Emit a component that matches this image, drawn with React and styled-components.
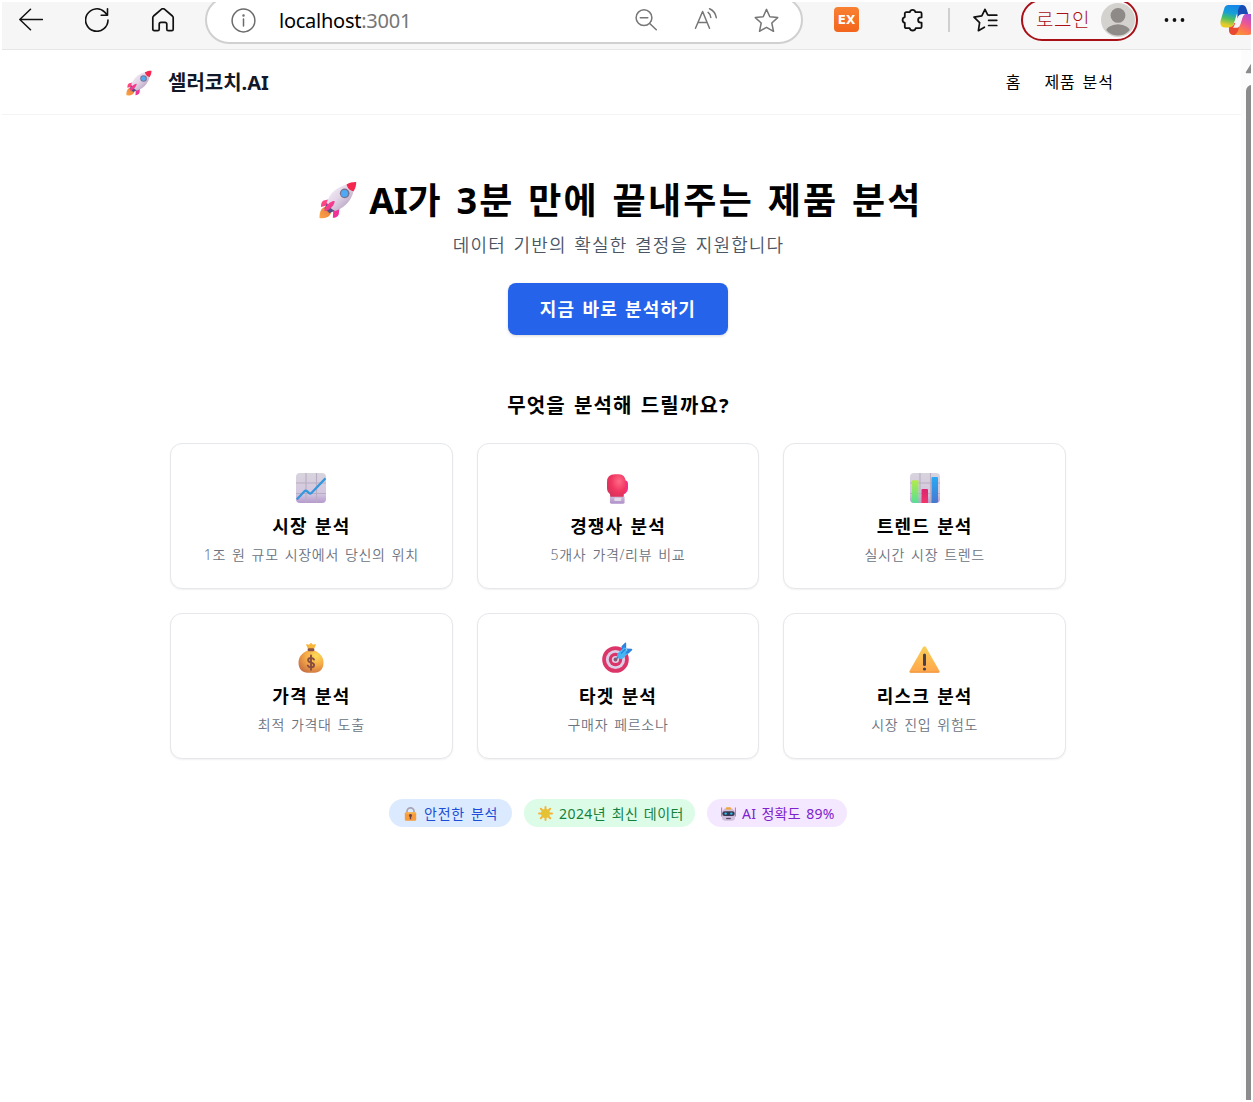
import React from 'react';
import styled, { createGlobalStyle } from 'styled-components';

const GlobalStyle = createGlobalStyle`
  *, *::before, *::after { box-sizing: border-box; }
  body {
    margin: 0;
    background: #fff;
    color: #000;
    font-family: "Noto Sans", "Noto Sans CJK KR", sans-serif;
    overflow: hidden;
  }
  h1, h2, h3, p { margin: 0; }
  svg { display: block; flex: none; }
`;

const Window = styled.div`
  width: 1253px;
  height: 1102px;
  padding: 2px;
  display: flex;
  flex-direction: column;
  overflow: hidden;
`;

/* Browser toolbar */
const Toolbar = styled.div`
  height: 48px;
  flex: none;
  padding: 0 0 12px 17px;
  display: flex;
  align-items: center;
  background: #f6f6f6;
  border-bottom: 1px solid #e6e6e6;
  overflow: hidden;
`;

const NavButtons = styled.div`
  display: flex;
  gap: 42px;
  margin-right: 30px;
`;

const AddressBar = styled.div`
  width: 598px;
  height: 48px;
  flex: none;
  display: flex;
  align-items: center;
  padding: 1px 22px 0 24px;
  margin-right: 31px;
  background: #fff;
  border: 2px solid #d0d0d0;
  border-radius: 24px;
`;

const Url = styled.span`
  flex: 1;
  margin-left: 23px;
  font-family: "Noto Sans", sans-serif;
  font-size: 20px;
  letter-spacing: -0.25px;
  color: #767676;
  b { font-weight: 400; color: #000; }
`;

const AddressActions = styled.div`
  display: flex;
  gap: 36px;
`;

const ExtensionBadge = styled.div`
  width: 25px;
  height: 25px;
  flex: none;
  border-radius: 4px;
  display: grid;
  place-items: center;
  background: linear-gradient(#f98032, #f2651c);
  color: #fff;
  font: 700 12px/14px "DejaVu Sans", sans-serif;
`;

const Slot = styled.div`
  flex: none;
  margin-left: ${(p) => p.$gap}px;
`;

const ToolbarDivider = styled.div`
  width: 2px;
  height: 24px;
  flex: none;
  margin-left: 24px;
  background: #cfcfcf;
`;

const LoginPill = styled.div`
  width: 117px;
  height: 42px;
  flex: none;
  margin-left: 23px;
  padding: 0 1px 0 13px;
  display: flex;
  align-items: center;
  justify-content: space-between;
  border: 2px solid #a80f16;
  border-radius: 21px;
  background: #f9f9f9;
  color: #a80f16;
  font: 300 19px/1 "Noto Sans CJK KR", sans-serif;
  span { margin-top: -3px; letter-spacing: 0.5px; white-space: nowrap; }
`;

/* Page */
const Viewport = styled.div`
  flex: 1;
  min-height: 0;
  display: flex;
`;

const Page = styled.div`
  flex: 1;
  min-width: 0;
`;

const Header = styled.header`
  height: 65px;
  padding-right: 7px;
  border-bottom: 1px solid #f3f4f6;
`;

const HeaderInner = styled.div`
  width: 1024px;
  height: 100%;
  margin: 0 auto;
  padding: 1px 17px 0 20px;
  display: flex;
  align-items: center;
  justify-content: space-between;
`;

const Brand = styled.div`
  display: flex;
  align-items: center;
  gap: 16px;
  font: 700 20px/28px "Noto Sans", "Noto Sans CJK KR", sans-serif;
  color: #111827;
`;

const NavLinks = styled.nav`
  display: flex;
  gap: 24px;
  margin-top: -1px;
  font-size: 16px;
  line-height: 24px;
  letter-spacing: 0.9px;
  word-spacing: 1.8px;
  span { margin-right: -0.8px; }
`;

const MainArea = styled.div`
  padding: 63px 7px 0 0;
`;

const Main = styled.main`
  width: 896px;
  margin: 0 auto;
  display: flex;
  flex-direction: column;
  align-items: center;
`;

const Title = styled.h1`
  display: flex;
  align-items: center;
  gap: 12px;
  height: 40px;
  padding-left: 6px;
  font-size: 36px;
  font-weight: 700;
  letter-spacing: 2.3px;
  word-spacing: 1.8px;
  white-space: nowrap;
  svg { margin-top: 4px; }
`;

const Latin = styled.span`
  letter-spacing: -0.3px;
`;

const Subtitle = styled.p`
  margin-top: 13px;
  padding-left: 1px;
  font-size: 18px;
  line-height: 28px;
  font-weight: 350;
  letter-spacing: 1.1px;
  word-spacing: 2px;
  color: #4b5563;
`;

const CtaButton = styled.button`
  width: 220px;
  height: 52px;
  margin-top: 24px;
  padding: 0 0 2px;
  border: 0;
  border-radius: 8px;
  background: #2563eb;
  color: #fff;
  font: 700 18px/28px "Noto Sans CJK KR", sans-serif;
  letter-spacing: 1.2px;
  word-spacing: 1.8px;
  box-shadow: 0 1px 3px rgba(0, 0, 0, 0.16);
`;

const SectionTitle = styled.h2`
  margin-top: 57px;
  padding-left: 1px;
  font-size: 20px;
  line-height: 28px;
  font-weight: 700;
  letter-spacing: 1.2px;
  word-spacing: 1.6px;
`;

const CardGrid = styled.div`
  width: 100%;
  margin-top: 23px;
  display: grid;
  grid-template-columns: repeat(3, 1fr);
  gap: 24px;
`;

const Card = styled.article`
  height: 146px;
  padding: 24px 24px 20px;
  display: flex;
  flex-direction: column;
  align-items: center;
  border: 1px solid #e5e7eb;
  border-radius: 12px;
  background: #fff;
  box-shadow: 0 1px 2px rgba(0, 0, 0, 0.06);
`;

const CardIcon = styled.div`
  height: 36px;
  flex: none;
  padding-bottom: ${(p) => p.$lift}px;
  display: flex;
  align-items: flex-end;
`;

const CardTitle = styled.h3`
  margin-top: 8px;
  font-size: 18px;
  line-height: 28px;
  font-weight: 700;
  letter-spacing: 1.1px;
  word-spacing: 1.6px;
`;

const CardText = styled.p`
  margin-top: 5px;
  font-size: 14px;
  line-height: 20px;
  font-weight: 350;
  letter-spacing: 0.7px;
  word-spacing: 1.6px;
  white-space: nowrap;
  color: #6b7280;
`;

const Pills = styled.div`
  margin-top: 40px;
  display: flex;
  gap: 12px;
`;

const pillTones = {
  blue: ['#dbeafe', '#1d4ed8'],
  green: ['#dcfce7', '#15803d'],
  purple: ['#f3e8ff', '#7e22ce'],
};

const Pill = styled.div`
  width: ${(p) => p.$width}px;
  height: 28px;
  padding: 1px 12px 0 14px;
  display: flex;
  align-items: center;
  gap: 6px;
  border-radius: 14px;
  background: ${(p) => pillTones[p.$tone][0]};
  color: ${(p) => pillTones[p.$tone][1]};
  font-size: 14px;
  line-height: 20px;
  letter-spacing: ${(p) => p.$tracking}px;
  word-spacing: 1.4px;
  white-space: nowrap;
`;

/* Scrollbar */
const Scrollbar = styled.div`
  width: 10px;
  padding: 12px 0 0 4px;
  background: #fcfcfc;
  overflow: hidden;
`;

const ScrollThumb = styled.div`
  width: 13px;
  height: 1040px;
  margin: 11px 0 0 1px;
  border-radius: 6px;
  background: #8b8b8b;
`;

const stroke = { fill: 'none', strokeLinecap: 'round', strokeLinejoin: 'round' };

const BackIcon = () => (
  <svg width="24" height="24" viewBox="0 0 24 24" {...stroke} stroke="#111" strokeWidth="1.5">
    <path d="M23.4 11.5H.8M11.5 1.2.8 11.5l10.7 10.2" />
  </svg>
);
const ReloadIcon = () => (
  <svg width="24" height="24" viewBox="0 0 24 24" {...stroke} stroke="#111" strokeWidth="1.6">
    <path d="M23 12A11.200 11.200 0 1 1 19.700 4.100L22.300 7M22.500.8v6.400h-6.300" />
  </svg>
);
const HomeIcon = () => (
  <svg width="24" height="24" viewBox="0 0 24 24" {...stroke} stroke="#111" strokeWidth="1.7">
    <path d="M1.800 9.800c0-.7.3-1.300.8-1.800L10.600 1.200c.8-.7 2-.7 2.800 0L21.400 8c.5.5.8 1.100.8 1.800v11.400c0 .8-.6 1.400-1.400 1.400h-3.600c-.8 0-1.400-.6-1.400-1.400v-5c0-1-.8-1.800-1.800-1.800h-4c-1 0-1.800.8-1.800 1.800v5c0 .8-.6 1.400-1.400 1.400H3.200c-.8 0-1.400-.6-1.400-1.400z" />
  </svg>
);
const InfoIcon = () => (
  <svg width="25" height="25" viewBox="0 0 25 25" {...stroke} stroke="#6b6b6b" strokeWidth="1.5">
    <circle cx="12.500" cy="12.500" r="11.400" />
    <path d="M12.500 11v7" />
    <circle cx="12.500" cy="7.400" r=".5" fill="#6b6b6b" />
  </svg>
);
const ZoomOutIcon = () => (
  <svg width="24" height="24" viewBox="0 0 24 24" {...stroke} stroke="#767676" strokeWidth="1.5">
    <circle cx="10" cy="9.700" r="7.900" />
    <path d="M6.300 9.700h7.500M15.700 15.500l6.600 6.300" />
  </svg>
);
const ReadAloudIcon = () => (
  <svg width="24" height="24" viewBox="0 0 24 24" {...stroke} stroke="#767676" strokeWidth="1.5">
    <path d="M1.500 20.300 8.600 3.500l6.900 16.800M4 14.600h9.200M14.100 4.300c1.600 1.100 2.600 3 2.700 5.200M15.600.8c3.400 1.500 6 4.900 6.700 8.900" />
  </svg>
);
const StarIcon = () => (
  <svg width="25" height="25" viewBox="0 0 25 25" {...stroke} stroke="#767676" strokeWidth="1.5">
    <path d="m12.500 1.400 3.300 7.300 7.900.9-5.900 5.400 1.700 8.300-7-4-7 4L7.200 15 1.300 9.600l7.900-.9z" />
  </svg>
);
const PuzzleIcon = () => (
  <svg width="24" height="24" viewBox="0 0 24 24" {...stroke} stroke="#111" strokeWidth="1.800">
    <path d="M6.200 4.200h3.500a3 3 0 0 1 5.800 0h4.700c.8 0 1.400.6 1.400 1.400v3.700h-.8a2.700 2.700 0 0 0 0 5.400h.8v4.100c0 .8-.6 1.400-1.400 1.400h-4.500a3.100 3.100 0 0 1-6 0H6.200c-.8 0-1.400-.6-1.400-1.400v-3.900a3 3 0 0 1 0-5.800V5.600c0-.8.6-1.400 1.400-1.400z" />
  </svg>
);
const FavoritesIcon = () => (
  <svg width="25" height="24" viewBox="0 0 25 24" {...stroke} stroke="#111" strokeWidth="1.700">
    <path d="m16.200 7.300-1.500-.4L12 1.300 8.800 7.900 1 9.100l5.600 5.500-1.200 8.100 6-3.500M15.600 7.200h8.200M15.600 12.300h8.200M15.600 17.500h8.200" />
  </svg>
);
const Avatar = () => (
  <svg width="34" height="34" viewBox="0 0 34 34">
    <clipPath id="avatarClip"><circle cx="17" cy="17" r="15.400" /></clipPath>
    <circle cx="17" cy="17" r="17" fill="#d4d2ce" />
    <g clipPath="url(#avatarClip)" fill="#8d8a87">
      <circle cx="17" cy="12.400" r="7.400" />
      <ellipse cx="17" cy="30" rx="12.500" ry="8.800" />
    </g>
  </svg>
);
const DotsIcon = () => (
  <svg width="21" height="6" viewBox="0 0 21 6" fill="#111">
    <circle cx="2.500" cy="3" r="1.900" /><circle cx="10.500" cy="3" r="1.900" /><circle cx="18.500" cy="3" r="1.900" />
  </svg>
);
const CopilotIcon = () => (
  <svg width="38" height="32" viewBox="0 0 38 32">
    <defs>
      <linearGradient id="cpA" x1=".5" y1="0" x2=".3" y2="1">
        <stop offset="0" stopColor="#1687e8" /><stop offset=".35" stopColor="#16a0d5" />
        <stop offset=".6" stopColor="#4cbf62" /><stop offset=".9" stopColor="#e9cb28" />
      </linearGradient>
      <linearGradient id="cpB" x1=".8" y1="0" x2=".25" y2="1">
        <stop offset="0" stopColor="#9c51e8" /><stop offset=".45" stopColor="#eb5599" />
        <stop offset=".75" stopColor="#ff7550" /><stop offset="1" stopColor="#f7953d" />
      </linearGradient>
    </defs>
    <path fill="#194bb5" d="M17 1h5c2.500 0 3.800 1.500 4.600 4l1.900 6H23c-3 0-4.500.6-5.500 3.800z" />
    <path fill="url(#cpA)" d="M8.500 1h13c-2 1-2.800 2.800-3.600 5.500L14 19c-.9 3-2.500 4.500-5.300 4.500H5.200C1 23.500-.4 20 .8 16L4 5.200C4.800 2.300 6 1 8.500 1z" />
    <path fill="#e94930" d="M9 23.300c2.800 0 4.400-1.300 5.300-4.300l8 1-3.200 6c-1 3-2 5-4.600 5h-1.300c-2.300 0-3.400-1.200-4.200-3.800z" />
    <path fill="url(#cpB)" d="M23 10h9c4.200 0 5.600 3 4.500 7l-3.300 10c-1 3-2.300 4-5 4H14.500c2-1 3.100-2.600 3.900-5.200L22 14z" />
    <path fill="#f6f3fa" d="M17.500 14.300c1-3 2.500-4.300 5.500-4.300h2.300c-1.700.8-2.300 2.200-3 4.300l-2 6.200c-.9 2.700-2 3.300-4.800 3.300h-2.700c1.100-1 1.500-2.200 2-3.800z" />
  </svg>
);

const Rocket = ({ size, id }) => (
  <svg width={size} height={size} viewBox="0 0 37 37">
    <defs>
      <linearGradient id={id + 'body'} x1=".15" y1=".15" x2=".8" y2=".8">
        <stop offset="0" stopColor="#f3eaf5" /><stop offset=".5" stopColor="#e1d4e6" /><stop offset="1" stopColor="#bba8c5" />
      </linearGradient>
      <linearGradient id={id + 'fin'} x1="0" y1="0" x2="1" y2="1">
        <stop offset="0" stopColor="#ff4d7d" /><stop offset="1" stopColor="#ed289f" />
      </linearGradient>
      <linearGradient id={id + 'fire'} x1="0" y1="1" x2="1" y2="0">
        <stop offset="0" stopColor="#ffa546" /><stop offset="1" stopColor="#e0793c" />
      </linearGradient>
    </defs>
    <path fill={`url(#${id}fire)`} d="M7 25C2.500 25.500.300 29.500.5 36c6.500.8 11.300-1.300 11.500-7z" />
    <path fill={`url(#${id}fin)`} d="M11 17.500 4.500 19C2.500 20 1.800 22.500 2 25.200l6.500-1.500zM20 26l-.8 6.500c-.9 2-3.200 3.300-5.700 3.400l.3-6.500z" />
    <path fill="#544e82" d="M8 21.500 5.300 26.800l5 4.600 5.500-2.700z" />
    <path fill={`url(#${id}body)`} d="M27 3.300C17 6 10.500 11.500 7.500 21c1.500 3.500 4.500 6.500 8.300 8.300C26 25.500 32 18 33.700 9.500z" />
    <path fill="#f4274f" d="M26.800 3.300C30 1.500 33 .9 36.200 1c.2 3-.7 6.200-2.500 9-3.300-.5-6-3-6.900-6.700z" />
    <path fill={`url(#${id}fin)`} d="M14.500 19.500c-3.800.5-7.700 4.200-9.200 8.700-.3.8.4 1.300 1.100 1 4-1.300 7.600-4.400 8.800-8.600.2-.6-.1-1.100-.7-1.100z" />
    <circle cx="25" cy="12" r="4.700" fill="#77718d" />
    <circle cx="24.800" cy="12.200" r="3.400" fill="#4fa9f5" />
  </svg>
);

const ChartTile = ({ id }) => (
  <>
    <defs>
      <linearGradient id={id} x1="0" y1="0" x2="0" y2="1">
        <stop offset="0" stopColor="#d8d4dd" /><stop offset=".7" stopColor="#d3c6df" /><stop offset="1" stopColor="#b59ace" />
      </linearGradient>
    </defs>
    <rect width="30" height="30" rx="4" fill={`url(#${id})`} />
    <path d="M0 10h30M0 20.500h30M10 0v30M20.500 0v30" stroke="#b8adc2" strokeWidth="1.100" />
  </>
);
const TrendEmoji = () => (
  <svg width="30" height="30" viewBox="0 0 30 30">
    <ChartTile id="tileA" />
    <path d="M.8 26.500 8.700 18a1.600 1.600 0 0 1 2 0l2.500 2.200c.7.600 1.400.5 2 0L29.500 5.300" fill="none" stroke="#3497dd" strokeWidth="2.300" />
  </svg>
);
const BarsEmoji = () => (
  <svg width="30" height="30" viewBox="0 0 30 30">
    <defs>
      <linearGradient id="barG" x1="0" y1="0" x2="0" y2="1"><stop stopColor="#b4ea4c" /><stop offset="1" stopColor="#55df94" /></linearGradient>
      <linearGradient id="barR" x1="0" y1="0" x2="0" y2="1"><stop stopColor="#dc246f" /><stop offset="1" stopColor="#f1366b" /></linearGradient>
      <linearGradient id="barB" x1="0" y1="0" x2="0" y2="1"><stop stopColor="#29a9f5" /><stop offset="1" stopColor="#4678d0" /></linearGradient>
    </defs>
    <ChartTile id="tileB" />
    <path fill="url(#barG)" d="M2 8.200q0-1 1-1h4.500q1 0 1 1V30H4q-2 0-2-2z" />
    <path fill="url(#barR)" d="M11.500 17q0-1 1-1H17q1 0 1 1v13h-6.500z" />
    <path fill="url(#barB)" d="M21.500 5q0-1 1-1H27q1 0 1 1v24l-2 1h-4.500z" />
  </svg>
);
const GloveEmoji = () => (
  <svg width="21" height="30" viewBox="0 0 21.500 30">
    <defs>
      <radialGradient id="glv" cx=".65" cy=".3" r=".8"><stop stopColor="#ff6a86" /><stop offset=".55" stopColor="#f03560" /><stop offset="1" stopColor="#cf3159" /></radialGradient>
      <linearGradient id="cuff" x1="0" y1="0" x2="0" y2="1"><stop stopColor="#cbbbd8" /><stop offset="1" stopColor="#ae8fca" /></linearGradient>
    </defs>
    <path fill="#f62f83" d="M15 6h3q3.500 0 3.500 4v4q0 4-3.500 6h-3z" />
    <path fill="url(#glv)" d="M8 0h4q7 0 7 8v6q0 4-1.700 5.500L17 24H3.500L3 20Q0 18 0 14V8Q0 0 8 0z" />
    <path fill="url(#cuff)" d="M3 23h15v5.500q0 1.500-1.500 1.500h-12Q3 30 3 28.500z" />
    <rect x="7.500" y="24" width="7" height="3.300" rx=".5" fill="#e3d9ea" />
  </svg>
);
const BagEmoji = () => (
  <svg width="26" height="30" viewBox="0 0 26 30">
    <defs>
      <radialGradient id="bag" cx=".7" cy=".25" r=".85"><stop stopColor="#ffdc58" /><stop offset=".5" stopColor="#f5a947" /><stop offset="1" stopColor="#c96f42" /></radialGradient>
    </defs>
    <path fill="#f8b63d" d="M10 6 8.300 2.200c-.4-.9.300-1.300 1-1l1.700.6 1.500-1.600q.5-.5 1 0L15 1.800l1.700-.6c.8-.3 1.400.1 1 1L16 6z" />
    <path fill="url(#bag)" d="M10 7.500h6c5.800 2 9.500 6.500 9.500 12 0 7-4 10.200-9 10.200h-7c-5 0-9-3.200-9-10.200 0-5.500 3.700-10 9.500-12z" />
    <rect x="9.600" y="5.300" width="6.800" height="3" rx="1.400" fill="#865248" />
    <path d="M16 16.600c-.6-1-1.500-1.600-3-1.600-1.700 0-2.900.8-2.900 2.200 0 3.300 6 1.500 6 4.800 0 1.400-1.300 2.300-3.100 2.300-1.500 0-2.600-.6-3.200-1.700M13 12.500v14.200" fill="none" stroke="#874e40" strokeWidth="1.900" strokeLinecap="round" />
  </svg>
);
const TargetEmoji = () => (
  <svg width="31" height="31" viewBox="0 0 31 31">
    <circle cx="13.500" cy="17.500" r="13.300" fill="#dc3668" />
    <circle cx="13.500" cy="17.500" r="9.600" fill="#dccee6" />
    <circle cx="13.500" cy="17.500" r="6.700" fill="#db3468" />
    <circle cx="13.500" cy="17.500" r="3.600" fill="#dccee6" />
    <circle cx="13.500" cy="17.500" r="1.900" fill="#8b5670" />
    <path d="m14 17 4-3.500" stroke="#6d6886" strokeWidth="1.500" />
    <path fill="#45b6f3" d="m15.500 11.500 6-6 5.300 5-5.500 5.700c-1.500 1.200-4 1-5.200-.3-1.100-1.200-1.300-3.300-.6-4.400z" />
    <path fill="#2b83df" d="M19.500 7.500V4.200L23 .8q1.200-.8 1.200.6v5l5.300.3q1.500.2.500 1.500l-3.500 3.300H23l2.500-3.500-2-1.800z" />
    <path fill="#45b6f3" d="m22 5 3 3-2 3-3-3z" />
    <path d="m19 11.500 4.500-4.500" stroke="#2586dc" strokeWidth="1.300" />
  </svg>
);
const WarningEmoji = () => (
  <svg width="31" height="27" viewBox="0 0 31 27">
    <defs><linearGradient id="wrn" x1="0" y1="0" x2="0" y2="1"><stop stopColor="#f9cf58" /><stop offset="1" stopColor="#ffa64b" /></linearGradient></defs>
    <path fill="url(#wrn)" d="M14 1.200q1.500-2 3 0l13.300 23.600q.9 2-1.200 2H1.900q-2.100 0-1.200-2z" />
    <path fill="#e99343" d="M.5 25.500q0 1.300 1.400 1.300h27.200q1.400 0 1.400-1.300z" opacity=".7" />
    <rect x="14" y="7.500" width="3" height="12.500" rx="1.500" fill="#47404e" />
    <circle cx="15.500" cy="23" r="1.600" fill="#47404e" />
  </svg>
);
const LockEmoji = () => (
  <svg width="15" height="14" viewBox="0.500 0 15 14">
    <path d="M4.500 7V4.300a3.500 3.500 0 0 1 7 0V7" fill="none" stroke="#aaa3b1" strokeWidth="1.700" />
    <rect x="2.300" y="5.300" width="11.400" height="8.500" rx="1.200" fill="#f79b3b" />
    <path d="M3 6h10" stroke="#fbc357" />
    <path fill="#67414b" d="M8 7a1.600 1.600 0 0 1 .7 3v2.300H7.300V10A1.600 1.600 0 0 1 8 7z" />
  </svg>
);
const SunEmoji = () => (
  <svg width="15" height="15" viewBox="0.500 0 15 15">
    <path d="M8 1v13M1.500 7.500h13M3.300 2.800l9.400 9.400M12.700 2.800l-9.400 9.400" stroke="#f3b43d" strokeWidth="2" strokeLinecap="round" />
    <circle cx="8" cy="7.500" r="4.500" fill="#e5c233" />
  </svg>
);
const RobotEmoji = () => (
  <svg width="15" height="14" viewBox="0.500 0 15 14">
    <path d="M1.100.5v9M14.900.5v9" stroke="#ff5b9d" strokeWidth="1.100" />
    <path fill="#d0bedc" d="M4 1.500h8l2.500 3v6q0 3.300-3.500 3.300H5q-3.500 0-3.500-3.300v-6z" />
    <path fill="#eda840" d="M5.800.3h4.400l.8 2.200H5z" />
    <rect x="1.800" y="4.200" width="12.400" height="4.800" rx="2.300" fill="#383853" />
    <circle cx="5.200" cy="6.600" r="1.200" fill="#26c5f3" /><circle cx="10.800" cy="6.600" r="1.200" fill="#26c5f3" />
    <path d="M5.700 11.500h4.600" stroke="#554b6e" strokeWidth="1.300" />
  </svg>
);

const cards = [
  { icon: TrendEmoji, lift: 1, title: '시장 분석', text: '1조 원 규모 시장에서 당신의 위치' },
  { icon: GloveEmoji, lift: 0, title: '경쟁사 분석', text: '5개사 가격/리뷰 비교' },
  { icon: BarsEmoji, lift: 1, title: '트렌드 분석', text: '실시간 시장 트렌드' },
  { icon: BagEmoji, lift: 1, title: '가격 분석', text: '최적 가격대 도출' },
  { icon: TargetEmoji, lift: 1, title: '타겟 분석', text: '구매자 페르소나' },
  { icon: WarningEmoji, lift: 1, title: '리스크 분석', text: '시장 진입 위험도' },
];

export default function App() {
  return (
    <Window>
      <GlobalStyle />
      <Toolbar>
        <NavButtons><BackIcon /><ReloadIcon /><HomeIcon /></NavButtons>
        <AddressBar>
          <InfoIcon />
          <Url><b>localhost</b>:3001</Url>
          <AddressActions><ZoomOutIcon /><ReadAloudIcon /><StarIcon /></AddressActions>
        </AddressBar>
        <ExtensionBadge>EX</ExtensionBadge>
        <Slot $gap={41}><PuzzleIcon /></Slot>
        <ToolbarDivider />
        <Slot $gap={23}><FavoritesIcon /></Slot>
        <LoginPill><span>로그인</span><Avatar /></LoginPill>
        <Slot $gap={26}><DotsIcon /></Slot>
        <Slot $gap={35}><CopilotIcon /></Slot>
      </Toolbar>
      <Viewport>
        <Page>
          <Header>
            <HeaderInner>
              <Brand><Rocket size={26} id="brand" /><span>셀러코치.AI</span></Brand>
              <NavLinks><span>홈</span><span>제품 분석</span></NavLinks>
            </HeaderInner>
          </Header>
          <MainArea>
            <Main>
              <Title>
                <Rocket size={38} id="hero" />
                <span><Latin>AI</Latin>가 3분 만에 끝내주는 제품 분석</span>
              </Title>
              <Subtitle>데이터 기반의 확실한 결정을 지원합니다</Subtitle>
              <CtaButton>지금 바로 분석하기</CtaButton>
              <SectionTitle>무엇을 분석해 드릴까요?</SectionTitle>
              <CardGrid>
                {cards.map(({ icon: Icon, lift, title, text }) => (
                  <Card key={title}>
                    <CardIcon $lift={lift}><Icon /></CardIcon>
                    <CardTitle>{title}</CardTitle>
                    <CardText>{text}</CardText>
                  </Card>
                ))}
              </CardGrid>
              <Pills>
                <Pill $tone="blue" $width={123} $tracking={0.8}><LockEmoji />안전한 분석</Pill>
                <Pill $tone="green" $width={171} $tracking={0.45}><SunEmoji />2024년 최신 데이터</Pill>
                <Pill $tone="purple" $width={140} $tracking={0.25}><RobotEmoji />AI 정확도 89%</Pill>
              </Pills>
            </Main>
          </MainArea>
        </Page>
        <Scrollbar>
          <svg width="14" height="12" viewBox="0 0 14 12"><path d="M7 1.500 12.500 10.500h-11z" fill="#8b8b8b" stroke="#8b8b8b" strokeWidth="1.500" strokeLinejoin="round" /></svg>
          <ScrollThumb />
        </Scrollbar>
      </Viewport>
    </Window>
  );
}
